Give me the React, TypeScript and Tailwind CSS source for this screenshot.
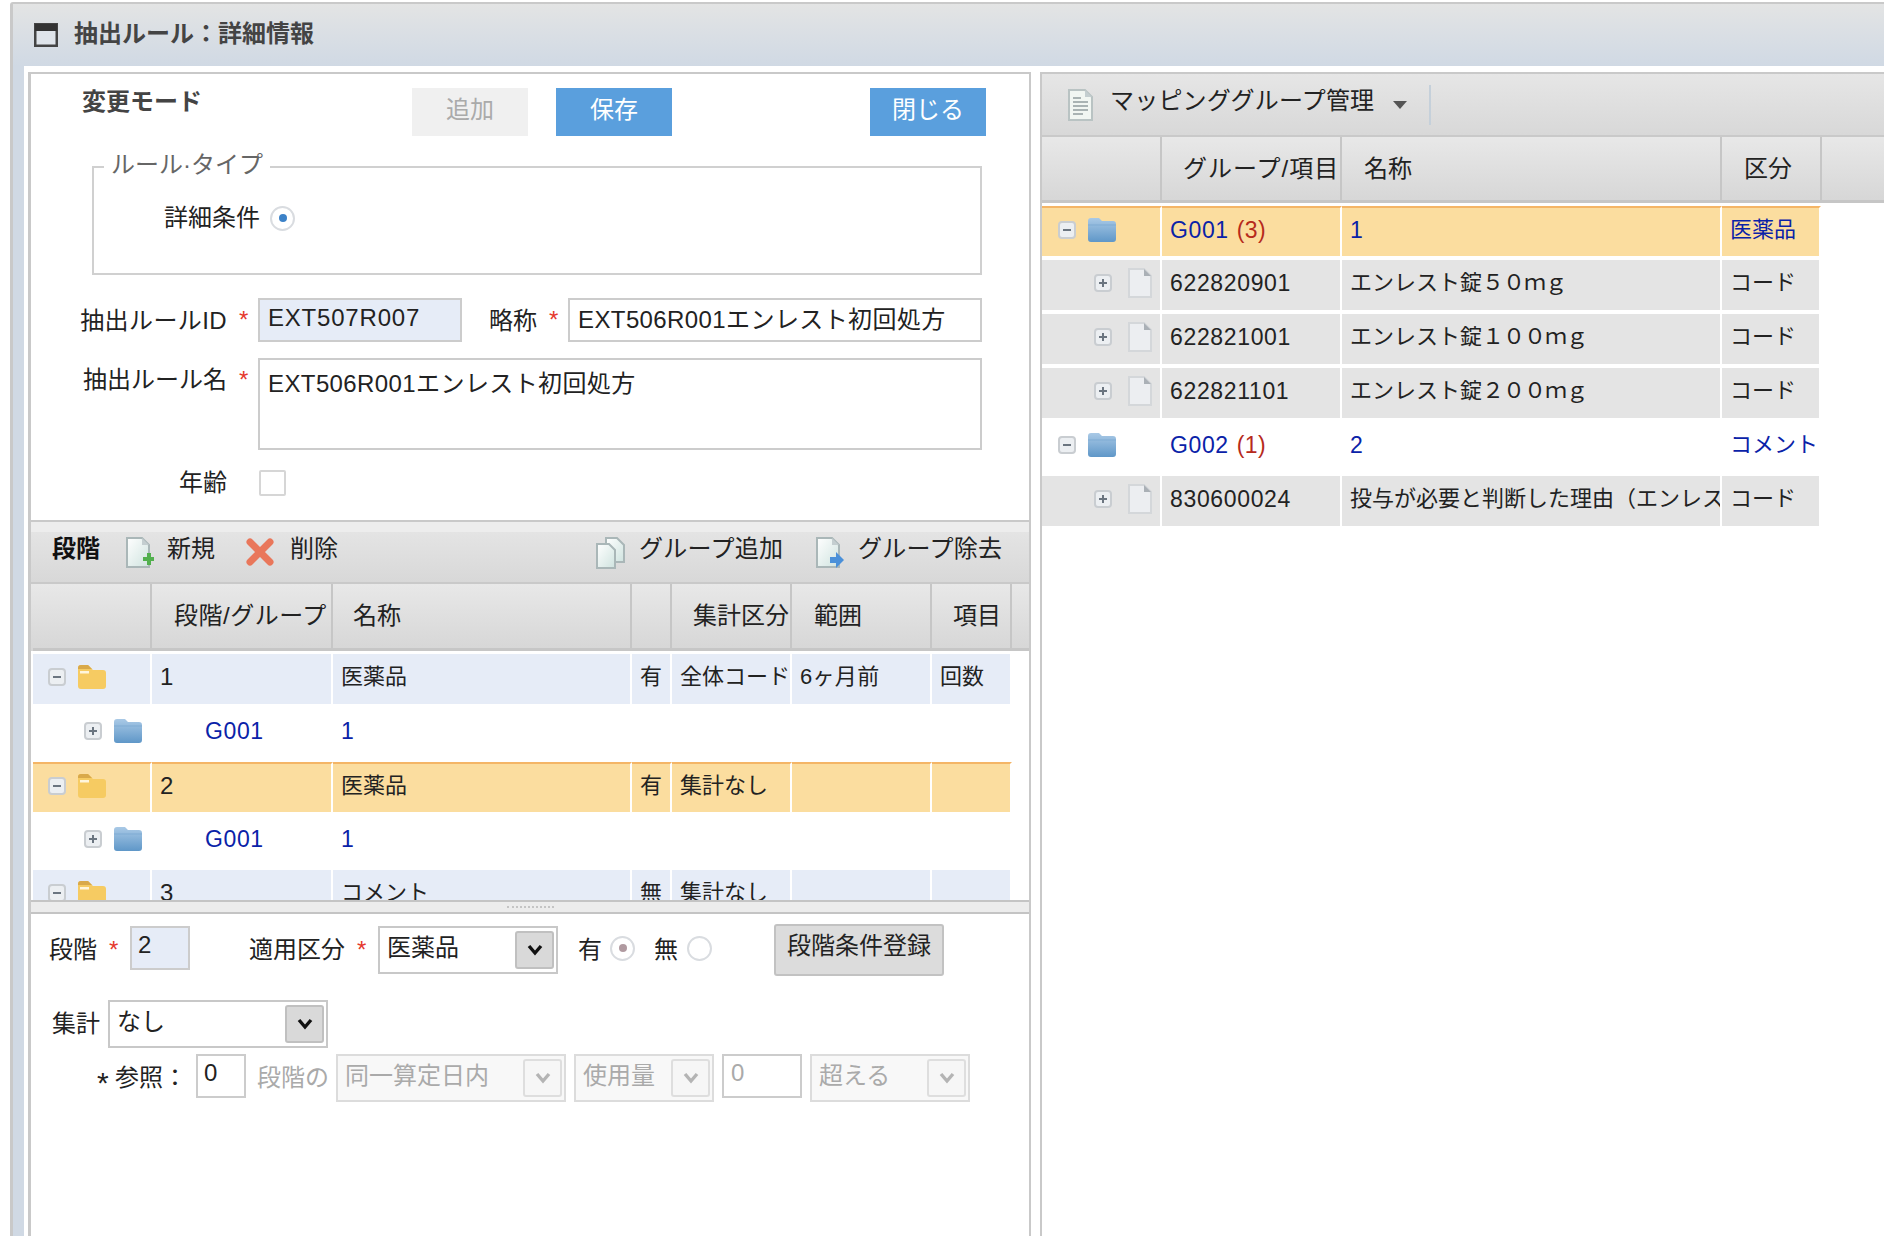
import React from "react";

const Minus = () => (
  <svg width="18" height="18" viewBox="0 0 18 18" className="flex-none">
    <rect x="1" y="1" width="16" height="16" rx="3" fill="#eceff2" stroke="#c9cdd1" strokeWidth="2" />
    <rect x="5" y="8" width="8" height="2" fill="#6b7580" />
  </svg>
);
const Plus = () => (
  <svg width="18" height="18" viewBox="0 0 18 18" className="flex-none">
    <rect x="1" y="1" width="16" height="16" rx="3" fill="#eceff2" stroke="#c9cdd1" strokeWidth="2" />
    <rect x="5" y="8" width="8" height="2" fill="#6b7580" />
    <rect x="8" y="5" width="2" height="8" fill="#6b7580" />
  </svg>
);
const FolderYellow = () => (
  <svg width="28" height="24" viewBox="0 0 28 24" className="flex-none">
    <path d="M0 3a3 3 0 0 1 3-3h7l5 5h10a3 3 0 0 1 3 3v13a3 3 0 0 1-3 3H3a3 3 0 0 1-3-3z" fill="#f6cb62" />
    <path d="M0 3a3 3 0 0 1 3-3h7l4 4H0z" fill="#d9a94a" />
    <rect x="2" y="6" width="9" height="2.5" fill="#fff6dc" />
  </svg>
);
const FolderBlue = () => (
  <svg width="28" height="24" viewBox="0 0 28 24" className="flex-none">
    <defs>
      <linearGradient id="fb" x1="0" y1="0" x2="0" y2="1">
        <stop offset="0" stopColor="#a9c9e6" />
        <stop offset="1" stopColor="#5f97c8" />
      </linearGradient>
    </defs>
    <path d="M0 3a3 3 0 0 1 3-3h8l3 3h11a3 3 0 0 1 3 3v15a3 3 0 0 1-3 3H3a3 3 0 0 1-3-3z" fill="url(#fb)" />
    <path d="M0 7h28" stroke="#7fabd3" strokeWidth="1" />
  </svg>
);
const DocPlain = () => (
  <svg width="24" height="30" viewBox="0 0 24 30" className="flex-none">
    <path d="M1 1h15l7 7v21H1z" fill="#eceef1" stroke="#d4d7da" strokeWidth="2" />
    <path d="M16 1v7h7z" fill="#aab0b6" />
  </svg>
);
const DocNew = () => (
  <svg width="28" height="32" viewBox="0 0 28 32" className="flex-none">
    <defs>
      <linearGradient id="dn" x1="0" y1="0" x2="1" y2="1">
        <stop offset="0" stopColor="#ffffff" />
        <stop offset="1" stopColor="#cfe3df" />
      </linearGradient>
    </defs>
    <path d="M1 1h15l7 7v22H1z" fill="url(#dn)" stroke="#aab7b8" strokeWidth="2" />
    <path d="M16 1v7h7z" fill="#c4ced0" />
    <path d="M17 20h4v-4h4v4h3v4h-3v4h-4v-4h-4z" fill="#52b04e" />
  </svg>
);
const DocRemove = () => (
  <svg width="28" height="32" viewBox="0 0 28 32" className="flex-none">
    <defs>
      <linearGradient id="dr" x1="0" y1="0" x2="1" y2="1">
        <stop offset="0" stopColor="#ffffff" />
        <stop offset="1" stopColor="#cfe3df" />
      </linearGradient>
    </defs>
    <path d="M1 1h15l7 7v22H1z" fill="url(#dr)" stroke="#aab7b8" strokeWidth="2" />
    <path d="M16 1v7h7z" fill="#c4ced0" />
    <path d="M14 20h6v-5l8 8-8 8v-5h-6z" fill="#4a90d9" />
  </svg>
);
const DocCopy = () => (
  <svg width="29" height="32" viewBox="0 0 29 32" className="flex-none">
    <defs>
      <linearGradient id="dc" x1="0" y1="0" x2="1" y2="1">
        <stop offset="0" stopColor="#ffffff" />
        <stop offset="1" stopColor="#cfe3df" />
      </linearGradient>
    </defs>
    <path d="M10 1h11l7 7v17H10z" fill="url(#dc)" stroke="#aab7b8" strokeWidth="2" />
    <path d="M1 7h12l6 6v18H1z" fill="url(#dc)" stroke="#aab7b8" strokeWidth="2" />
  </svg>
);
const XIcon = () => (
  <svg width="30" height="30" viewBox="0 0 30 30" className="flex-none">
    <path d="M5 5l20 20M25 5L5 25" stroke="#e9775b" strokeWidth="7" strokeLinecap="round" />
  </svg>
);
const DocLines = () => (
  <svg width="25" height="32" viewBox="0 0 25 32" className="flex-none">
    <path d="M1 1h16l7 7v23H1z" fill="#f1f6f2" stroke="#b9c3c3" strokeWidth="2" />
    <path d="M17 1v7h7z" fill="#c4ced0" />
    <path d="M5 9h8M5 13h15M5 17h15M5 21h15M5 25h10" stroke="#a9b3b3" strokeWidth="2" />
  </svg>
);
const WindowIcon = () => (
  <svg width="24" height="24" viewBox="0 0 24 24" className="flex-none">
    <rect x="1.25" y="1.25" width="21.5" height="21.5" fill="#dfe4ea" stroke="#444" strokeWidth="2.5" />
    <rect x="1" y="1" width="22" height="7" fill="#333" />
  </svg>
);
const Chevron = ({ disabled }: { disabled?: boolean }) => (
  <svg width="18" height="14" viewBox="0 0 18 14">
    <path d="M3 3l6 7 6-7" fill="none" stroke={disabled ? "#b4b4b4" : "#111"} strokeWidth="3.4" />
  </svg>
);

const Req = () => <span className="block w-[12px] flex-none leading-[28px] text-[#e5382d]">*</span>;

const Radio = ({ dot }: { dot?: string }) => (
  <span className="flex h-[25px] w-[25px] flex-none items-center justify-center rounded-full border-2 border-[#d9dce0] bg-white">
    {dot ? <svg width="8" height="8" viewBox="0 0 8 8"><circle cx="4" cy="4" r="4" fill={dot} /></svg> : null}
  </span>
);

const Select = ({ text, disabled, className }: { text: string; disabled?: boolean; className: string }) => (
  <div
    className={
      "flex h-[48px] flex-none items-center justify-between border-2 pl-[7px] pr-[2px] " +
      (disabled ? "border-[#dcdcdc] bg-[#f8f8f8] text-[#aaaaaa] " : "border-[#c8c8c8] bg-white ") +
      className
    }
  >
    <span className="pb-[4px] whitespace-nowrap">{text}</span>
    <span
      className={
        "flex h-[38px] w-[39px] flex-none items-center justify-center rounded-[3px] border-2 " +
        (disabled ? "border-[#dedede] bg-[#f6f6f6]" : "border-[#c0c0c0] bg-[#d9d9d9]")
      }
    >
      <Chevron disabled={disabled} />
    </span>
  </div>
);

const headL = [
  { w: "w-[119px]", t: "", p: "" },
  { w: "w-[181px]", t: "段階/グループ", p: "pl-[22px] tracking-[0.5px]" },
  { w: "w-[299px]", t: "名称", p: "pl-[20px]" },
  { w: "w-[40px]", t: "", p: "" },
  { w: "w-[120px]", t: "集計区分", p: "pl-[21px]" },
  { w: "w-[140px]", t: "範囲", p: "pl-[22px]" },
  { w: "w-[80px]", t: "項目", p: "pl-[21px]" },
];
const headR = [
  { w: "w-[120px]", t: "", p: "" },
  { w: "w-[180px]", t: "グループ/項目", p: "pl-[21px] tracking-[1px]" },
  { w: "w-[380px]", t: "名称", p: "pl-[22px]" },
  { w: "w-[100px]", t: "区分", p: "pl-[22px]" },
];

const HeaderRow = ({ cols, className }: { cols: { w: string; t: string; p: string }[]; className: string }) => (
  <div className={"flex bg-gradient-to-b from-[#e8e8e8] to-[#d6d6d6] " + className}>
    {cols.map((c, i) => (
      <div
        key={i}
        className={
          "flex h-full flex-none items-center overflow-hidden whitespace-nowrap border-r-[2px] border-b-[3px] border-[#c6c6c6] " +
          c.w +
          " " +
          c.p
        }
      >
        {c.t}
      </div>
    ))}
    <div className="h-full flex-1 border-b-[3px] border-[#c6c6c6]" />
  </div>
);

const Cell = ({ w, bg, sel, className, children }: { w: string; bg: string; sel?: boolean; className?: string; children?: React.ReactNode }) => (
  <div
    className={
      "flex h-[50px] flex-none items-center overflow-hidden whitespace-nowrap border-r-[2px] border-white pb-[4px] pl-[8px] text-[22px] " +
      w +
      " " +
      bg +
      " " +
      (sel ? "border-t-2 border-t-[#f4b566] " : "") +
      (className ?? "")
    }
  >
    {children}
  </div>
);

const LB = "text-[#0a22a8]";
const LW = ["w-[119px]", "w-[181px]", "w-[299px]", "w-[40px]", "w-[120px]", "w-[140px]", "w-[80px]"];

const ParentRow = ({ n, name, yn, agg, range, item, bg, sel }: { n: string; name: string; yn: string; agg: string; range?: string; item?: string; bg: string; sel?: boolean }) => (
  <div className="mb-[4px] flex">
    <div className={"flex h-[50px] w-[119px] flex-none items-center gap-[12px] border-r-[2px] border-white pb-[4px] pl-[15px] " + bg + (sel ? " border-t-2 border-t-[#f4b566]" : "")}>
      <Minus />
      <FolderYellow />
    </div>
    <Cell w={LW[1]} bg={bg} sel={sel} className="pl-[8px] text-[24px]">{n}</Cell>
    <Cell w={LW[2]} bg={bg} sel={sel} className="pl-[7px]">{name}</Cell>
    <Cell w={LW[3]} bg={bg} sel={sel}>{yn}</Cell>
    <Cell w={LW[4]} bg={bg} sel={sel}>{agg}</Cell>
    <Cell w={LW[5]} bg={bg} sel={sel} className="tracking-[0.3px]">{range}</Cell>
    <Cell w={LW[6]} bg={bg} sel={sel}>{item}</Cell>
  </div>
);

const ChildRow = () => (
  <div className="mb-[4px] flex h-[50px] items-center pb-[4px] text-[23px]">
    <div className="flex w-[119px] flex-none items-center gap-[12px] pl-[51px]">
      <Plus />
      <FolderBlue />
    </div>
    <div className={"w-[181px] flex-none pl-[53px] tracking-[0.6px] " + LB}>G001</div>
    <div className={"pl-[8px] " + LB}>1</div>
  </div>
);

const RW = ["w-[120px]", "w-[180px]", "w-[380px]", "w-[99px]"];

const GroupRow = ({ g, c, name, kind, bg, sel }: { g: string; c: string; name: string; kind: string; bg: string; sel?: boolean }) => (
  <div className="mb-[4px] flex">
    <div className={"flex h-[50px] w-[120px] flex-none items-center gap-[12px] border-r-[2px] border-white pb-[4px] pl-[16px] " + bg + (sel ? " border-t-2 border-t-[#f4b566]" : "")}>
      <Minus />
      <FolderBlue />
    </div>
    <Cell w={RW[1]} bg={bg} sel={sel} className={LB + " text-[23px]"}>
      <span className="tracking-[0.6px]">{g}</span>
      <span className="ml-[8px] tracking-[0.5px] text-[#b62a1c]">{c}</span>
    </Cell>
    <Cell w={RW[2]} bg={bg} sel={sel} className={LB + " text-[23px]"}>{name}</Cell>
    <Cell w={RW[3]} bg={bg} sel={sel} className={LB + " border-r-0"}>{kind}</Cell>
  </div>
);

const ItemRow = ({ code, name }: { code: string; name: React.ReactNode }) => {
  const bg = "bg-[#e4e4e4]";
  return (
    <div className="mb-[4px] flex">
      <div className={"flex h-[50px] w-[120px] flex-none items-center gap-[16px] border-r-[2px] border-white pb-[4px] pl-[52px] " + bg}>
        <Plus />
        <DocPlain />
      </div>
      <Cell w={RW[1]} bg={bg} className="text-[23px] tracking-[0.65px]">{code}</Cell>
      <Cell w={RW[2]} bg={bg}>{name}</Cell>
      <Cell w={RW[3]} bg={bg} className="border-r-0">コード</Cell>
    </div>
  );
};

const drug = (a: string) => (
  <span>
    エンレスト錠<span className="tracking-[-1px]">{a}</span>
  </span>
);

const inputBase = "border-2 border-[#cccccc] px-[8px] outline-none";

export default function App() {
  return (
    <div className="h-[1236px] w-[1884px] overflow-hidden bg-white pl-[10px] pt-[2px] font-['Liberation_Sans','Noto_Sans_CJK_JP',sans-serif] text-[24px] leading-[28px] text-[#222222]">
      <div className="flex h-[1234px] flex-col rounded-tl-[3px] border-l-[3px] border-t-2 border-[#c9c9c9]">
        <div className="flex h-[62px] flex-none items-center bg-gradient-to-b from-[#e3e4e4] to-[#d0d9e4] pl-[21px]">
          <WindowIcon />
          <span className="ml-[16px] pb-[2px] font-bold text-[#444444]">抽出ルール：詳細情報</span>
        </div>
        <div className="flex min-h-0 flex-1">
          <div className="w-[11px] flex-none bg-[#d0d9e4]" />
          <div className="flex min-h-0 flex-1 pl-[4px] pt-[6px]">
            {/* left column */}
            <div className="flex w-[1003px] flex-none flex-col border-l-[3px] border-r-2 border-[#c9c9c9]">
              <section className="h-[450px] flex-none border-y-2 border-[#c9c9c9] pt-[14px]">
                <div className="flex items-start pl-[51px]">
                  <span className="w-[120px] flex-none whitespace-nowrap font-bold text-[#444444]">変更モード</span>
                  <button className="ml-[210px] h-[48px] w-[116px] bg-[#f0f0f0] pb-[5px] text-[#aaaaaa]">追加</button>
                  <button className="ml-[28px] h-[48px] w-[116px] bg-[#5a9fdd] pb-[5px] text-white">保存</button>
                  <button className="ml-[198px] h-[48px] w-[116px] bg-[#5a9fdd] pb-[5px] text-white">閉じる</button>
                </div>
                <fieldset className="ml-[61px] mt-[17px] h-[122px] w-[890px] border-2 border-[#d0d0d0]">
                  <legend className="ml-[10px] px-[7px] pb-[4px] leading-[24px] text-[#666666]">ルール·タイプ</legend>
                  <div className="mt-[23px] flex items-center pl-[70px]">
                    <span className="whitespace-nowrap">詳細条件</span>
                    <span className="ml-[10px]"><Radio dot="#3c82c8" /></span>
                  </div>
                </fieldset>
                <div className="mt-[23px] flex h-[44px] items-center">
                  <span className="w-[196px] flex-none whitespace-nowrap pt-[2px] text-right tracking-[0.4px]">抽出ルールID</span>
                  <span className="ml-[12px]"><Req /></span>
                  <input readOnly value="EXT507R007" className={"ml-[7px] h-[44px] w-[204px] bg-[#e6ecf7] pb-[4px] tracking-[0.8px] " + inputBase} />
                  <span className="ml-[27px] w-[48px] flex-none whitespace-nowrap pt-[2px]">略称</span>
                  <span className="ml-[12px]"><Req /></span>
                  <input readOnly value="EXT506R001エンレスト初回処方" className={"ml-[7px] h-[44px] w-[414px] bg-white pb-[6px] tracking-[0.4px] " + inputBase} />
                </div>
                <div className="mt-[16px] flex items-start">
                  <span className="w-[196px] flex-none whitespace-nowrap pt-[8px] text-right">抽出ルール名</span>
                  <span className="ml-[12px] pt-[8px]"><Req /></span>
                  <textarea
                    readOnly
                    value="EXT506R001エンレスト初回処方"
                    className="ml-[7px] h-[92px] w-[724px] resize-none border-2 border-[#cccccc] bg-white px-[8px] pt-[10px] tracking-[0.4px] outline-none"
                  />
                </div>
                <div className="mt-[19px] flex items-center">
                  <span className="w-[196px] flex-none whitespace-nowrap text-right">年齢</span>
                  <span className="ml-[32px] h-[26px] w-[27px] flex-none rounded-[2px] border-2 border-[#d6d6d6] bg-white" />
                </div>
              </section>

              <div className="h-[10px] flex-none bg-[#ededed]" />

              <div className="flex h-[52px] flex-none items-start border-b-[2px] border-[#c9c9c9] bg-gradient-to-b from-[#e4e4e4] to-[#d8d8d8] pl-[21px] leading-[32px]">
                <span className="w-[48px] flex-none pt-[1px] font-bold text-[#111111]">段階</span>
                <span className="ml-[26px] mt-[5px]"><DocNew /></span>
                <span className="ml-[13px] w-[48px] flex-none pt-[1px]">新規</span>
                <span className="ml-[30px] mt-[5px]"><XIcon /></span>
                <span className="ml-[15px] w-[48px] flex-none pt-[1px]">削除</span>
                <span className="ml-[258px] mt-[5px]"><DocCopy /></span>
                <span className="ml-[14px] w-[144px] flex-none whitespace-nowrap pt-[1px] tracking-[0.3px]">グループ追加</span>
                <span className="ml-[33px] mt-[5px]"><DocRemove /></span>
                <span className="ml-[14px] whitespace-nowrap pt-[1px] tracking-[0.3px]">グループ除去</span>
              </div>

              <HeaderRow cols={headL} className="h-[67px] flex-none pl-[2px]" />
              <div className="mt-[3px] h-[246px] flex-none overflow-hidden pl-[2px]">
                <ParentRow n="1" name="医薬品" yn="有" agg="全体コード" range="6ヶ月前" item="回数" bg="bg-[#e6ecf7]" />
                <ChildRow />
                <ParentRow n="2" name="医薬品" yn="有" agg="集計なし" bg="bg-[#fbdd9f]" sel />
                <ChildRow />
                <ParentRow n="3" name="コメント" yn="無" agg="集計なし" bg="bg-[#e6ecf7]" />
              </div>
              <div className="flex h-[14px] flex-none items-center justify-center border-y-2 border-[#c4c4c4] bg-[#ececec]">
                <span className="w-[47px] border-t-2 border-dotted border-[#c4c4c4]" />
              </div>

              <div className="min-h-0 flex-1 bg-white pt-[10px]">
                <div className="flex h-[52px] items-center pl-[18px]">
                  <span className="w-[48px] flex-none">段階</span>
                  <span className="ml-[12px]"><Req /></span>
                  <input readOnly value="2" className="mb-[4px] ml-[9px] h-[44px] w-[60px] border-2 border-[#cccccc] bg-[#e6ecf7] px-[6px] pb-[6px] outline-none" />
                  <span className="ml-[59px] w-[96px] flex-none whitespace-nowrap">適用区分</span>
                  <span className="ml-[12px]"><Req /></span>
                  <span className="ml-[9px]"><Select text="医薬品" className="w-[180px]" /></span>
                  <span className="ml-[20px] w-[24px] flex-none">有</span>
                  <span className="mb-[4px] ml-[8px]"><Radio dot="#b09aa0" /></span>
                  <span className="ml-[19px] w-[24px] flex-none">無</span>
                  <span className="mb-[4px] ml-[9px]"><Radio /></span>
                  <button className="ml-[62px] h-[52px] w-[170px] flex-none rounded-[3px] border-2 border-[#c2c2c2] bg-[#dcdcdc] pb-[8px] whitespace-nowrap">段階条件登録</button>
                </div>
                <div className="mt-[24px] flex items-center pl-[21px]">
                  <span className="w-[48px] flex-none">集計</span>
                  <span className="ml-[8px]"><Select text="なし" className="w-[220px]" /></span>
                </div>
                <div className="mt-[6px] flex items-start pl-[66px]">
                  <span className="w-[99px] flex-none whitespace-nowrap pt-[10px]">
                    <span className="inline-block w-[18px] align-[-7px] text-[30px]">*</span>参照：
                  </span>
                  <input readOnly value="0" className="h-[44px] w-[50px] flex-none border-2 border-[#cccccc] bg-white px-[6px] pb-[6px] outline-none" />
                  <span className="ml-[11px] w-[72px] flex-none whitespace-nowrap pt-[10px] text-[#aaaaaa]">段階の</span>
                  <span className="ml-[7px]"><Select disabled text="同一算定日内" className="w-[230px]" /></span>
                  <span className="ml-[8px]"><Select disabled text="使用量" className="w-[140px]" /></span>
                  <input readOnly value="0" className="ml-[8px] h-[44px] w-[80px] flex-none border-2 border-[#cccccc] bg-white px-[7px] pb-[6px] text-[#aaaaaa] outline-none" />
                  <span className="ml-[8px]"><Select disabled text="超える" className="w-[160px]" /></span>
                </div>
              </div>
            </div>

            {/* right column */}
            <div className="ml-[9px] flex min-w-0 flex-1 flex-col border-l-2 border-t-2 border-[#c9c9c9]">
              <div className="flex h-[63px] flex-none items-center border-b-[2px] border-[#c9c9c9] bg-gradient-to-b from-[#e6e6e6] to-[#d8d8d8] pl-[26px]">
                <DocLines />
                <span className="ml-[17px] w-[264px] flex-none whitespace-nowrap pb-[8px] tracking-[0.2px]">マッピンググループ管理</span>
                <svg width="14" height="8" viewBox="0 0 14 8" className="ml-[19px] flex-none">
                  <path d="M0 0h14L7 8z" fill="#555555" />
                </svg>
                <span className="ml-[22px] h-[40px] w-[2px] flex-none bg-[#c5d0da]" />
              </div>
              <HeaderRow cols={headR} className="h-[66px] flex-none" />
              <div className="mt-[3px] flex-none">
                <GroupRow g="G001" c="(3)" name="1" kind="医薬品" bg="bg-[#fbdd9f]" sel />
                <ItemRow code="622820901" name={drug("５０ｍｇ")} />
                <ItemRow code="622821001" name={drug("１００ｍｇ")} />
                <ItemRow code="622821101" name={drug("２００ｍｇ")} />
                <GroupRow g="G002" c="(1)" name="2" kind="コメント" bg="bg-white" />
                <ItemRow code="830600024" name="投与が必要と判断した理由（エンレスト錠を処方" />
              </div>
            </div>
          </div>
        </div>
      </div>
    </div>
  );
}
